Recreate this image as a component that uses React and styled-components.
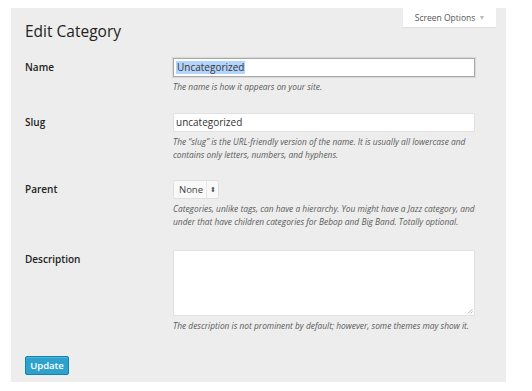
import React from "react";
import styled, { createGlobalStyle } from "styled-components";

const Global = createGlobalStyle`
  html, body {
    margin: 0;
    background: #fff;
  }
  body {
    font-family: "Open Sans", "Liberation Sans", sans-serif;
    color: #222;
  }
`;

const Page = styled.div`
  padding: 8px 26px 9px 11px;
`;

const Panel = styled.div`
  width: 495px;
  height: 374px;
  background: #ededed;
  box-sizing: border-box;
  padding: 0 10px 0 14px;
`;

const Header = styled.div`
  display: flex;
  justify-content: space-between;
  align-items: flex-start;
`;

const Title = styled.h1`
  margin: 10px 0 0;
  font-size: 15.5px;
  font-weight: 400;
  line-height: 26px;
  color: #222;
`;

const ScreenTab = styled.div`
  height: 19px;
  width: 93px;
  background: #fff;
  box-shadow: 0 1px 1px rgba(0, 0, 0, 0.06);
  display: flex;
  align-items: center;
  justify-content: center;
  gap: 5px;
  font-size: 8.5px;
  color: #555;
`;

const Arrow = styled.span`
  width: 0;
  height: 0;
  border-left: 2.5px solid transparent;
  border-right: 2.5px solid transparent;
  border-top: 4px solid #bbb;
  margin-top: 1px;
`;

const Form = styled.div`
  margin-top: 14px;
`;

const Row = styled.div`
  display: grid;
  grid-template-columns: 148px 302px;
  margin-bottom: ${p => p.$gap}px;
`;

const Label = styled.div`
  font-size: 10px;
  font-weight: 600;
  line-height: 19px;
  color: #222;
`;

const Field = styled.div`
  display: flex;
  flex-direction: column;
  align-items: flex-start;
`;

const TextBox = styled.div`
  box-sizing: border-box;
  width: 302px;
  height: 19px;
  background: #fff;
  border: 1px solid ${p => (p.$focus ? "#a9a9a9" : "#e2e2e2")};
  box-shadow: ${p => (p.$focus ? "0 0 1px 1px rgba(0,0,0,0.08)" : "none")};
  padding: 0 2px;
  font-size: 10px;
  line-height: 17px;
  color: #333;
  display: flex;
  align-items: center;
`;

const Selected = styled.span`
  background: #b3d4fd;
  line-height: 13px;
  padding: 0 1px;
`;

const Select = styled.div`
  box-sizing: border-box;
  width: 46px;
  height: 19px;
  display: flex;
  align-items: center;
  background: #f9f9f9;
  border: 1px solid #e0e0e0;
  border-radius: 2px;
  font-size: 9.5px;
  color: #444;
`;

const SelectText = styled.span`
  flex: 1;
  padding-left: 5px;
`;

const Stepper = styled.span`
  border-left: 1px solid #e6e6e6;
  height: 100%;
  display: flex;
  align-items: center;
  padding: 0 2px 0 3px;
  font-size: 7px;
  color: #555;
`;

const TextArea = styled.div`
  box-sizing: border-box;
  width: 302px;
  height: 66px;
  background: #fff;
  border: 1px solid #e2e2e2;
  position: relative;
`;

const Grip = styled.svg`
  position: absolute;
  right: 1px;
  bottom: 1px;
`;

const Help = styled.p`
  margin: 3px 0 0;
  font-size: 8.4px;
  font-style: italic;
  line-height: 13px;
  color: #5a5a5a;
`;

const Button = styled.button`
  height: 19px;
  width: 44px;
  padding: 0;
  border: 1px solid #0e84b5;
  border-radius: 2px;
  background: #2ea2cc;
  box-shadow: inset 0 1px 0 rgba(120, 200, 230, 0.5);
  color: #fff;
  font-family: "Open Sans", "Liberation Sans", sans-serif;
  font-size: 9.5px;
  font-weight: 600;
`;

export default function App() {
  return (
    <>
      <Global />
      <Page>
        <Panel>
          <Header>
            <Title>Edit Category</Title>
            <ScreenTab>
              Screen Options <Arrow />
            </ScreenTab>
          </Header>
          <Form>
            <Row $gap={20}>
              <Label>Name</Label>
              <Field>
                <TextBox $focus>
                  <Selected>Uncategorized</Selected>
                </TextBox>
                <Help>The name is how it appears on your site.</Help>
              </Field>
            </Row>
            <Row $gap={19}>
              <Label>Slug</Label>
              <Field>
                <TextBox>uncategorized</TextBox>
                <Help>
                  The “slug” is the URL-friendly version of the name. It is usually all lowercase and
                  <br />
                  contains only letters, numbers, and hyphens.
                </Help>
              </Field>
            </Row>
            <Row $gap={22}>
              <Label>Parent</Label>
              <Field>
                <Select>
                  <SelectText>None</SelectText>
                  <Stepper>⬍</Stepper>
                </Select>
                <Help>
                  Categories, unlike tags, can have a hierarchy. You might have a Jazz category, and
                  <br />
                  under that have children categories for Bebop and Big Band. Totally optional.
                </Help>
              </Field>
            </Row>
            <Row $gap={20}>
              <Label>Description</Label>
              <Field>
                <TextArea>
                  <Grip width="6" height="6" viewBox="0 0 6 6">
                    <path d="M5.5 1 L1 5.5 M5.5 3.5 L3.5 5.5" stroke="#999" strokeWidth="0.7" />
                  </Grip>
                </TextArea>
                <Help>The description is not prominent by default; however, some themes may show it.</Help>
              </Field>
            </Row>
            <Button>Update</Button>
          </Form>
        </Panel>
      </Page>
    </>
  );
}
